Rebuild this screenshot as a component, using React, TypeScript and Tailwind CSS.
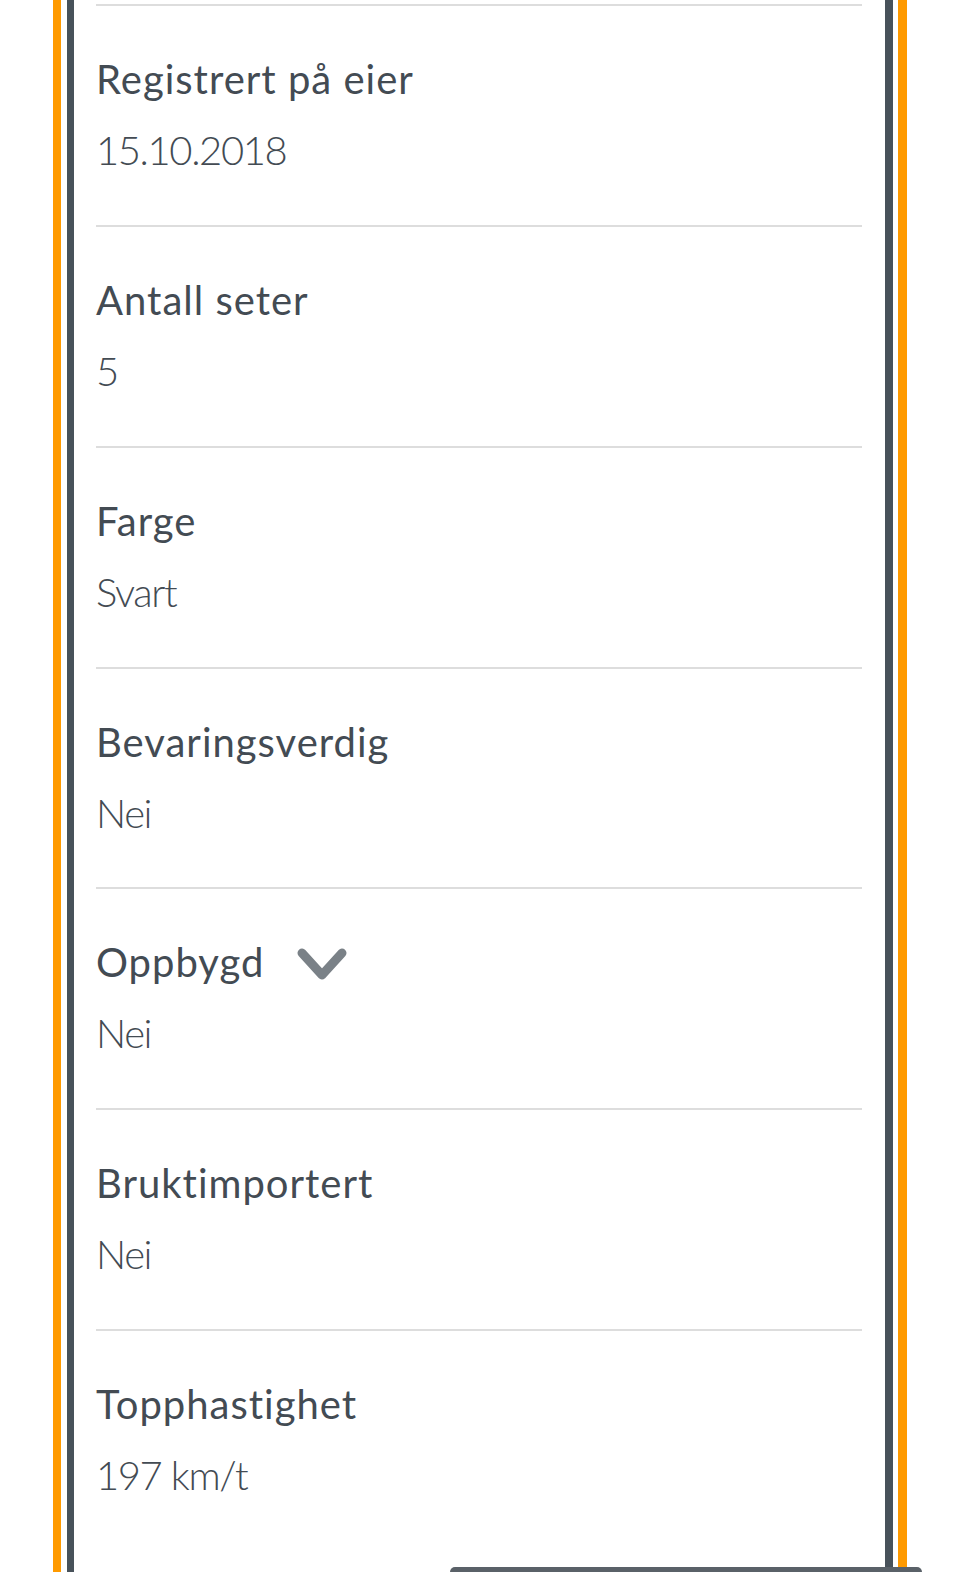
import React from "react";

const rows: { label: string; value: string; chevron?: boolean }[] = [
  { label: "Registrert på eier", value: "15.10.2018" },
  { label: "Antall seter", value: "5" },
  { label: "Farge", value: "Svart" },
  { label: "Bevaringsverdig", value: "Nei" },
  { label: "Oppbygd", value: "Nei", chevron: true },
  { label: "Bruktimportert", value: "Nei" },
  { label: "Topphastighet", value: "197 km/t" },
];

function Chevron() {
  return (
    <svg width="52" height="40" viewBox="0 0 52 40" className="ml-[33px] mt-[10px]">
      <path d="M5 6 L25 28 L45 6" fill="none" stroke="#7a8187" strokeWidth="9" strokeLinecap="round" strokeLinejoin="round" />
    </svg>
  );
}

export default function App() {
  return (
    <div className="relative h-[1572px] overflow-hidden bg-white px-[53px]" style={{ fontFamily: "Lato, 'Open Sans', sans-serif" }}>
      <div className="h-full border-l-[8px] border-r-[9px] border-[#ff9a00] pl-[6px] pr-[5px]">
        <div className="h-full border-l-[7px] border-r-[8px] border-[#48525a] pl-[22px] pr-[23px]">
          <div className="h-[4px]" />
          {rows.map((r) => (
            <div key={r.label} className="h-[220.86px] flex flex-col">
              <div className="h-[2px] bg-[#dddddd]" />
              <div className="mt-[49px] flex items-center h-[48px]">
                <span className="text-[40px] leading-[48px] text-[#434b53] font-normal tracking-[1px]">{r.label}</span>
                {r.chevron && <Chevron />}
              </div>
              <div className="mt-[21px] text-[40px] leading-[52px] text-[#434b53] font-light tracking-[-1.4px]">{r.value}</div>
            </div>
          ))}
        </div>
      </div>
      <div className="absolute bottom-0 left-[450px] w-[472px] h-[5px] rounded-t-[6px] bg-[#5a6168]" />
    </div>
  );
}
